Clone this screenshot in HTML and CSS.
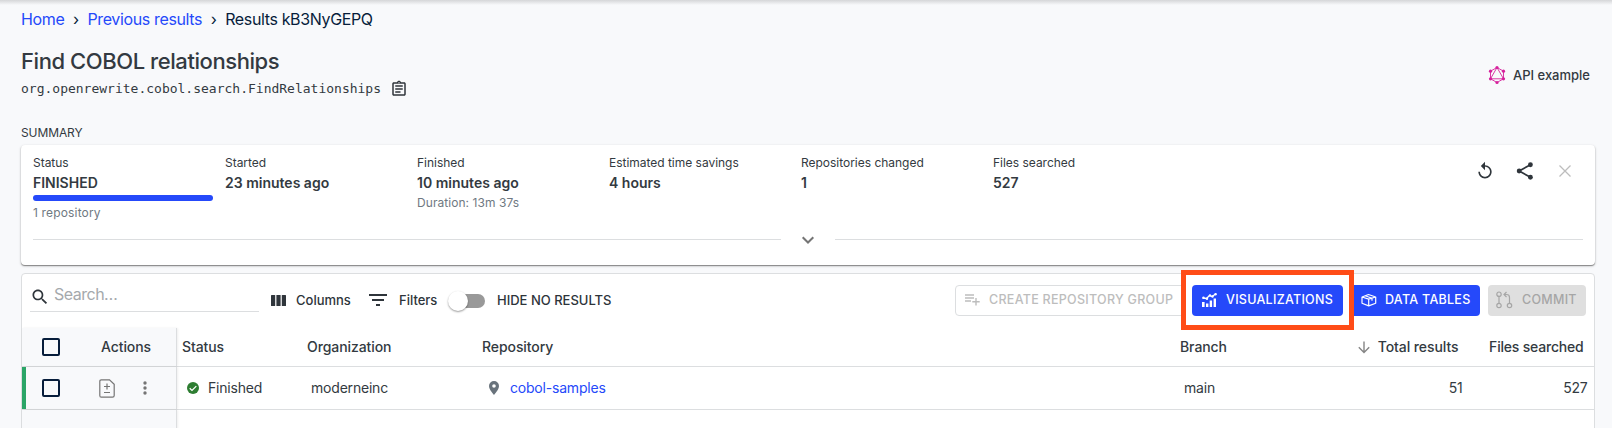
FILE: index.html
```html
<!DOCTYPE html>
<html lang="en">
<head>
<meta charset="utf-8">
<title>Find COBOL relationships</title>
<link rel="stylesheet" href="styles.css">
</head>
<body>
<div class="page">
  <nav class="breadcrumb"><a>Home</a><span class="sep">›</span><a>Previous results</a><span class="sep">›</span><span>Results kB3NyGEPQ</span></nav>
  <header class="header">
    <div>
      <h1 class="title">Find COBOL relationships</h1>
      <div class="recipe"><code>org.openrewrite.cobol.search.FindRelationships</code>
        <svg class="clip" width="18" height="18" viewBox="0 0 24 24"><path d="M7 15h7v2H7zm0-4h10v2H7zm0-4h10v2H7zm12-4h-4.180C14.400 1.840 13.300 1 12 1s-2.400.840-2.820 2H5c-1.100 0-2 .9-2 2v14c0 1.100.9 2 2 2h14c1.100 0 2-.9 2-2V5c0-1.100-.9-2-2-2zm-7-.25c.410 0 .750.340.750.750s-.340.750-.750.750-.750-.340-.750-.750.340-.750.750-.750zM19 19H5V5h14v14z"/></svg>
      </div>
    </div>
    <div class="api">
      <svg width="18" height="20" viewBox="0 0 18 20" fill="none" stroke="#d6219c" stroke-width=".9"><path d="M9 2.500 15.500 6.200V13.800L9 17.500 2.500 13.800V6.200ZM9 2.500 15.500 13.800H2.500Z"/><g fill="#d6219c" stroke="none"><circle cx="9" cy="2.500" r="1.600"/><circle cx="15.500" cy="6.200" r="1.600"/><circle cx="15.500" cy="13.800" r="1.600"/><circle cx="9" cy="17.500" r="1.600"/><circle cx="2.500" cy="13.800" r="1.600"/><circle cx="2.500" cy="6.200" r="1.600"/></g></svg>
      <span>API example</span>
    </div>
  </header>
  <div class="section-label">SUMMARY</div>
  <section class="summary">
    <div class="stats">
      <div class="stat"><div class="label">Status</div><div class="value">FINISHED</div><div class="progress"></div><div class="note repo-note">1 repository</div></div>
      <div class="stat"><div class="label">Started</div><div class="value">23 minutes ago</div></div>
      <div class="stat"><div class="label">Finished</div><div class="value">10 minutes ago</div><div class="note">Duration: 13m 37s</div></div>
      <div class="stat"><div class="label">Estimated time savings</div><div class="value">4 hours</div></div>
      <div class="stat"><div class="label">Repositories changed</div><div class="value">1</div></div>
      <div class="stat"><div class="label">Files searched</div><div class="value">527</div></div>
      <div class="stat-actions">
        <svg width="20" height="20" viewBox="0 0 24 24"><path d="M12 5V1L7 6l5 5V7c3.310 0 6 2.690 6 6s-2.690 6-6 6-6-2.690-6-6H4c0 4.420 3.580 8 8 8s8-3.580 8-8-3.580-8-8-8z"/></svg>
        <svg width="20" height="20" viewBox="0 0 24 24"><path d="M5 12 18.500 4.500M5 12l13.500 7.500" stroke="#2f353b" stroke-width="2"/><circle cx="18.500" cy="4.500" r="2.900"/><circle cx="18.500" cy="19.500" r="2.900"/><circle cx="5" cy="12" r="2.900"/></svg>
        <svg class="off" width="20" height="20" viewBox="0 0 20 20"><path d="M4.500 4.500l11 11M15.500 4.500l-11 11" fill="none" stroke="#bdbdbd" stroke-width="1.300"/></svg>
      </div>
    </div>
    <div class="divider"><i></i><svg width="14" height="10" viewBox="0 0 14 10" fill="none" stroke="#757575" stroke-width="2"><path d="M1.700 2.200 7 7.500l5.300-5.300"/></svg><i></i></div>
  </section>

  <section class="results">
    <div class="toolbar">
      <div class="search"><svg width="20" height="20" viewBox="0 0 24 24"><path d="M15.500 14h-.790l-.280-.270C15.410 12.590 16 11.110 16 9.500 16 5.910 13.090 3 9.500 3S3 5.910 3 9.500 5.910 16 9.500 16c1.610 0 3.090-.590 4.230-1.570l.270.280v.790l5 4.990L20.490 19l-4.990-5zm-6 0C7.010 14 5 11.990 5 9.500S7.010 5 9.500 5 14 7.010 14 9.500 11.990 14 9.500 14z"/></svg><span>Search…</span></div>
      <div class="tool columns"><svg width="15" height="11" viewBox="0 0 15 11"><rect width="4.200" height="11" rx=".5"/><rect x="5.400" width="4.200" height="11" rx=".5"/><rect x="10.800" width="4.200" height="11" rx=".5"/></svg>Columns</div>
      <div class="tool filters"><svg width="18" height="12" viewBox="0 0 18 12"><path d="M0 0h18v2H0zM3 5h12v2H3zM7 10h4v2H7z"/></svg>Filters</div>
      <div class="switch"><span class="thumb"></span></div>
      <span class="tool hide">HIDE NO RESULTS</span>
      <div class="buttons">
        <div class="btn outline"><svg width="15" height="12" viewBox="0 0 15 12"><path d="M0 1h9M0 4h9M0 7h6M11 4v7.500M7.300 7.800h7.400" fill="none" stroke="#bdbdbd" stroke-width="1.400"/></svg>CREATE REPOSITORY GROUP</div>
        <div class="focus-frame"><div class="btn primary viz"><svg width="15" height="14" viewBox="0 0 15 14" fill="#fff"><path d="M0 9h2.600v5H0zM4 10.500h2.400V14H4zM7.700 7.500h2.400V14H7.700zM11.600 5.500H14V14h-2.400z"/><path d="M.5 5 4.500 5.500 7.500 2.500l2.500 1 4.300-3" fill="none" stroke="#fff" stroke-width="1.300"/><circle cx="1.500" cy="4.700" r="1.200"/><circle cx="5" cy="5.800" r="1.200"/><circle cx="8" cy="2.500" r="1.200"/><circle cx="10.500" cy="3.500" r="1.200"/><circle cx="13.500" cy="1.200" r="1.200"/></svg>VISUALIZATIONS</div></div>
        <div class="btn primary data"><svg width="16" height="14" viewBox="0 0 16 14" fill="none" stroke="#fff" stroke-width="1.200" stroke-linejoin="round"><path d="M1 4v6.300l6.700 2.600 7-2.600V4L7.700 6.100zM1 4l6.500-2.500L14.700 4M7.700 6.100v6.800M4.200 2.800l6.800 2.400v2.500"/></svg>DATA TABLES</div>
        <div class="btn commit"><svg width="17" height="18" viewBox="0 0 17 18" fill="none" stroke="#a6a6a6" stroke-width="1.200"><circle cx="3" cy="3.200" r="2.200"/><circle cx="3" cy="14.500" r="2.200"/><circle cx="13.500" cy="14.500" r="2.200"/><path d="M3 5.400v7M13.500 12.300V6.500c0-2-1-3-3-3H8M10.500 1 8 3.500 10.500 6"/></svg>COMMIT</div>
      </div>
    </div>
    <div class="row head">
      <div class="pinned"><span class="check"></span><span class="actions">Actions</span></div>
      <div class="c-status">Status</div><div class="c-org">Organization</div><div class="c-repo">Repository</div><div class="c-branch">Branch</div>
      <div class="c-total"><svg width="12" height="13" viewBox="0 0 12 13" fill="none" stroke="#858585" stroke-width="1.400"><path d="M6 .5v11M.8 6.300 6 11.500l5.200-5.200"/></svg>Total results</div><div class="c-files">Files searched</div>
    </div>
    <div class="row body">
      <div class="pinned"><span class="check"></span>
        <svg class="file" width="16" height="19" viewBox="0 0 16 19" fill="none" stroke="#757575" stroke-width="1.200"><path d="M2.300.8h8.200l4.700 4.500v11.200q0 1.700-1.700 1.700H2.300Q.8 18.200.8 16.500V2.500Q.8.800 2.300.8zM8 4.500v6M5 7.500h6M5 13.500h6"/></svg>
        <svg width="4" height="14" viewBox="0 0 4 14" fill="#757575"><circle cx="2" cy="2" r="1.700"/><circle cx="2" cy="7" r="1.700"/><circle cx="2" cy="12" r="1.700"/></svg>
      </div>
      <div class="c-status"><svg width="12" height="12" viewBox="0 0 12 12"><circle cx="6" cy="6" r="6" fill="#2e7d32"/><path d="M2.700 6.200 5 8.400l4.300-4.300" fill="none" stroke="#fff" stroke-width="1.300"/></svg>Finished</div>
      <div class="c-org">moderneinc</div>
      <div class="c-repo"><svg width="10" height="14" viewBox="0 0 10 14"><path d="M5 0a5 5 0 0 0-5 5c0 3.500 5 9 5 9s5-5.500 5-9a5 5 0 0 0-5-5zm0 6.800a1.800 1.800 0 1 1 0-3.600 1.800 1.800 0 0 1 0 3.600z" fill="#69737c"/></svg><a>cobol-samples</a></div>
      <div class="c-branch">main</div><div class="c-total">51</div><div class="c-files">527</div>
    </div>
    <div class="row rest"><div class="pinned"></div></div>
  </section>
</div>
</body>
</html>
```
FILE: styles.css
```css
* { box-sizing: border-box; }
body { margin: 0; background: #f8f9fb; color: #333a41; font: 14px/20px Inter, sans-serif; }
svg { display: block; flex: none; fill: #2f353b; }
svg[fill="none"] { fill: none; }
svg[fill="#fff"] { fill: #fff; }
svg[fill="#757575"] { fill: #757575; }
a { color: #2549fa; }
.page { height: 428px; overflow: hidden; padding: 8px 17px 0 21px; display: flex; flex-direction: column; background: linear-gradient(#d5d6d8, #f8f9fb 5px); }
.page > * { flex: none; }
.breadcrumb { height: 22px; line-height: 22px; font-size: 16px; letter-spacing: -.36px; display: flex; color: #071d3b; }
.sep { width: 23px; text-align: center; }
.header { height: 95px; display: flex; justify-content: space-between; }
.title { margin: 18px 0 0; font-size: 22px; line-height: 26px; font-weight: 500; letter-spacing: -.43px; }
.recipe { display: flex; align-items: center; margin-top: 5px; height: 20px; }
.recipe code { font: 13px/20px "DejaVu Sans Mono", monospace; width: 369px; }
.api { display: flex; align-items: center; gap: 7px; margin: 35px 5px 0 0; height: 20px; font-size: 13px; font-weight: 500; }
.section-label { height: 20px; line-height: 16px; font-size: 12px; letter-spacing: -.1px; }
.summary { width: 1574px; height: 120px; background: #fff; border-radius: 4px; box-shadow: 0 1px 1px #888, 0 1px 3px #0003; padding: 9px 12px 0; }
.stats { display: flex; height: 80px; }
.stat { width: 192px; }
.label { font-size: 12px; line-height: 18px; letter-spacing: -.02px; }
.value { font-size: 14px; line-height: 22px; font-weight: 600; }
.progress { width: 180px; height: 6px; border-radius: 3px; background: #2549fa; margin-top: 1px; }
.note { font-size: 12px; line-height: 18px; color: #6f7982; letter-spacing: .06px; }
.repo-note { margin-top: 3px; letter-spacing: .16px; }
.stat-actions { margin: 7px 8px 0 auto; display: flex; gap: 20px; height: 20px; }
.divider { display: flex; align-items: center; justify-content: space-between; height: 11px; }
.divider i { width: 748px; height: 1px; background: #dcdee0; }
.results { width: 1574px; height: 170px; margin-top: 8px; background: #fff; border: 1px solid #dcdee0; border-radius: 4px; }
.toolbar { height: 54px; display: flex; }
.search { width: 229px; height: 38px; margin-left: 8px; border-bottom: 1px solid #dcdee0; display: flex; font-size: 16px; letter-spacing: -.5px; color: #a5a9ac; }
.search svg { margin: 13px 4px 0 0; }
.search span { line-height: 40px; }
.tool { height: 20px; margin-top: 16px; font-size: 13px; font-weight: 500; display: flex; align-items: center; gap: 10px; color: #2d343a; }
.columns { margin-left: 12px; width: 98px; }
.filters { width: 82px; gap: 12px; }
.switch { width: 34px; height: 14px; margin-top: 20px; border-radius: 7px; background: #999; }
.thumb { display: block; width: 20px; height: 20px; margin: -3px 0 0 -3px; border-radius: 50%; background: #fff; box-shadow: 0 1px 2px #0006; }
.hide { margin-left: 12px; }
.buttons { margin-left: auto; display: flex; padding-right: 8px; }
.btn { height: 31px; margin-top: 11px; padding-bottom: 1px; border-radius: 4px; display: flex; align-items: center; font-size: 12.5px; font-weight: 500; letter-spacing: .28px; white-space: nowrap; }
.outline { width: 230px; border: 1px solid #dcdee0; color: #bdbdbd; padding-left: 9px; gap: 9px; }
.focus-frame { position: relative; z-index: 1; width: 173px; height: 60px; margin: -4px 0 0 -4px; border: 5px solid #ff4c17; background: #fff; padding: 10px 6px; }
.primary { background: #2549fa; color: #fff; }
.viz { width: 151px; margin: 0; padding-left: 10px; gap: 9px; }
.data { width: 130px; margin-left: -4px; padding-left: 11px; gap: 8px; }
.commit { width: 98px; margin-left: 8px; padding-left: 8px; gap: 9px; background: #dfdfdf; color: #a6a6a6; }
.row { display: flex; align-items: center; border-bottom: 1px solid #dcdee0; height: 43px; letter-spacing: -.2px; }
.head { height: 39px; font-weight: 500; letter-spacing: -.08px; }
.rest { border: 0; }
.pinned { width: 155px; height: 100%; flex: none; display: flex; align-items: center; padding-left: 20px; background: #f8f9fb; border-right: 1px solid #dcdee0; box-shadow: 1px 0 2px #0001; }
.body .pinned { border-left: 4px solid #2ba567; padding-left: 16px; }
.check { width: 18px; height: 18px; border: 2px solid #071d3b; border-radius: 2px; }
.actions { margin-left: 41px; }
.file { margin: 0 28px 0 39px; }
.row > div { display: flex; align-items: center; }
.c-status { width: 125px; padding-left: 5px; }
.c-org { width: 175px; padding-left: 5px; }
.c-repo { width: 698px; padding-left: 5px; }
.c-branch { width: 150px; padding-left: 5px; }
.c-total { width: 133.5px; justify-content: flex-end; gap: 8px; }
.c-files { width: 125px; justify-content: flex-end; letter-spacing: -.2px; }
.body .c-status { padding-left: 10px; gap: 9px; }
.body .c-org, .body .c-branch { padding-left: 9px; }
.body .c-repo { padding-left: 12px; gap: 11px; }
.body .c-total, .body .c-files { position: relative; left: 4px; }
```
